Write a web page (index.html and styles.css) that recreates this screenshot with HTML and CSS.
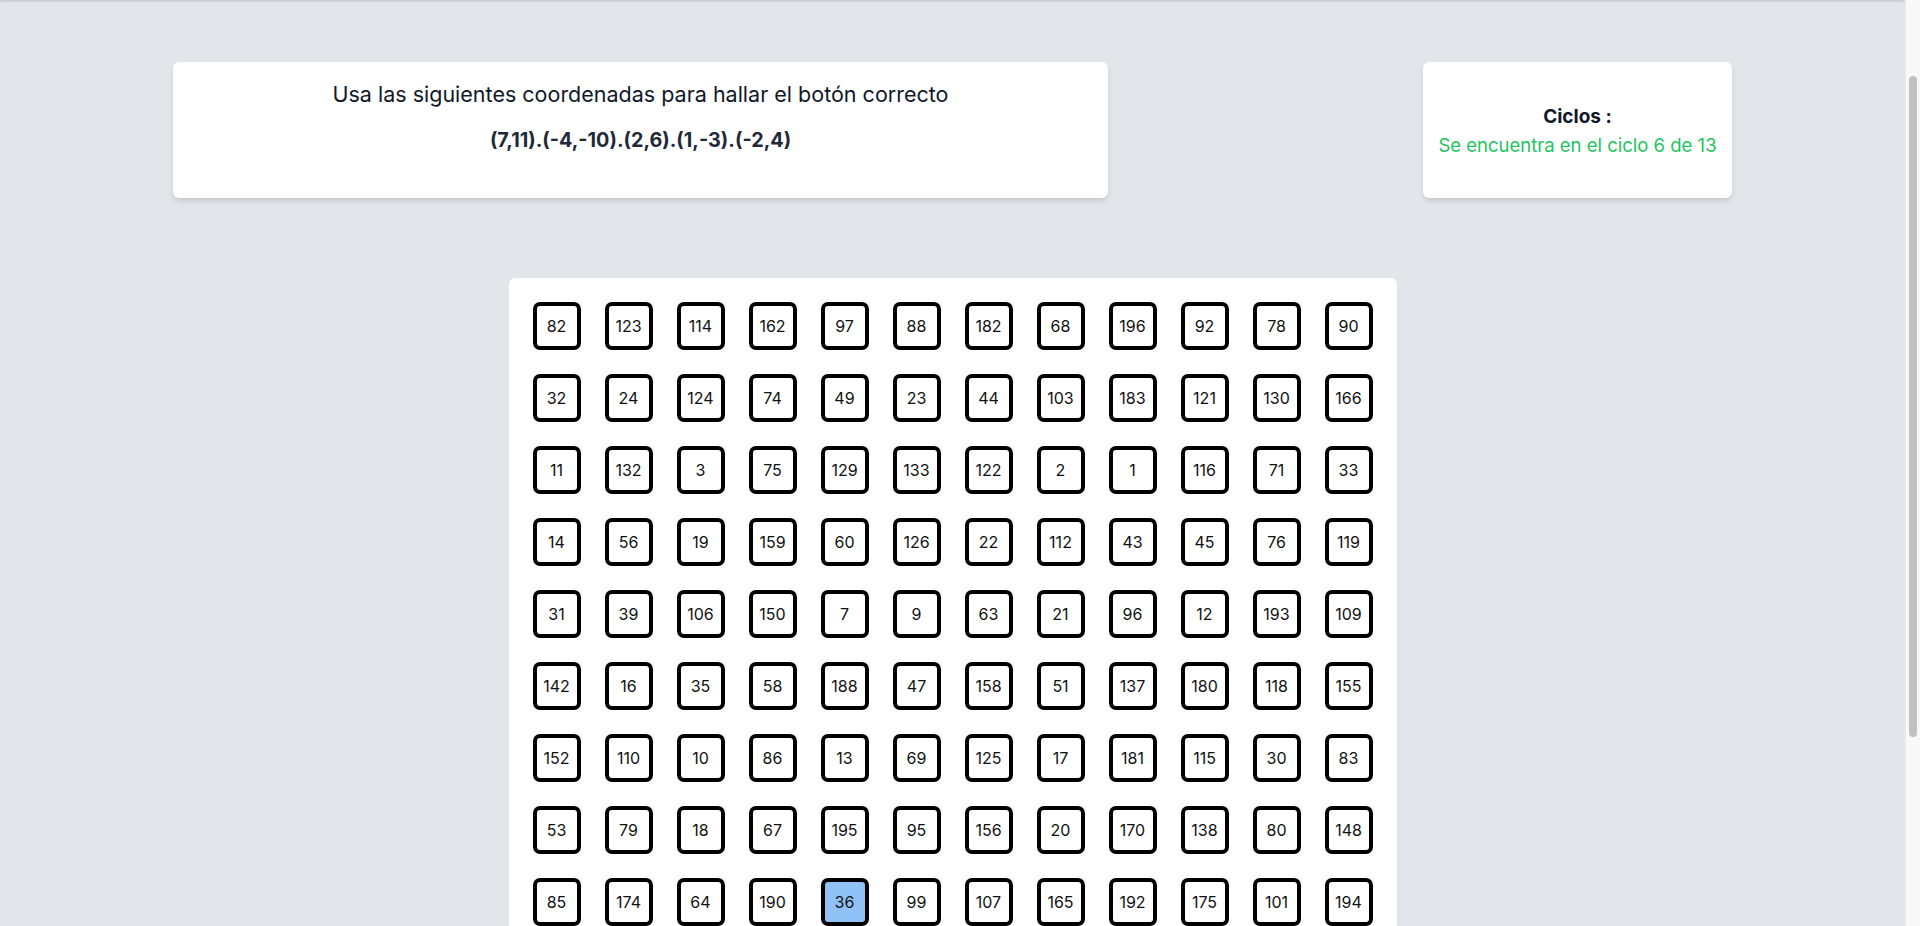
FILE: index.html
```html
<!DOCTYPE html>
<html lang="es">
<head>
<meta charset="utf-8">
<title>Coordenadas</title>
<link rel="stylesheet" href="styles.css">
</head>
<body>
<header class="topbar"></header>
<main class="page">
  <section class="top-row">
    <div class="card instructions">
      <p class="instructions-title">Usa las siguientes coordenadas para hallar el botón correcto</p>
      <p class="instructions-coords">(7,11).(-4,-10).(2,6).(1,-3).(-2,4)</p>
    </div>
    <div class="card cycles">
      <p class="cycles-label">Ciclos :</p>
      <p class="cycles-value">Se encuentra en el ciclo 6 de 13</p>
    </div>
  </section>
  <section class="board">
    <div class="board-grid">
      <button class="cell">82</button><button class="cell">123</button><button class="cell">114</button><button class="cell">162</button><button class="cell">97</button><button class="cell">88</button><button class="cell">182</button><button class="cell">68</button><button class="cell">196</button><button class="cell">92</button><button class="cell">78</button><button class="cell">90</button>
      <button class="cell">32</button><button class="cell">24</button><button class="cell">124</button><button class="cell">74</button><button class="cell">49</button><button class="cell">23</button><button class="cell">44</button><button class="cell">103</button><button class="cell">183</button><button class="cell">121</button><button class="cell">130</button><button class="cell">166</button>
      <button class="cell">11</button><button class="cell">132</button><button class="cell">3</button><button class="cell">75</button><button class="cell">129</button><button class="cell">133</button><button class="cell">122</button><button class="cell">2</button><button class="cell">1</button><button class="cell">116</button><button class="cell">71</button><button class="cell">33</button>
      <button class="cell">14</button><button class="cell">56</button><button class="cell">19</button><button class="cell">159</button><button class="cell">60</button><button class="cell">126</button><button class="cell">22</button><button class="cell">112</button><button class="cell">43</button><button class="cell">45</button><button class="cell">76</button><button class="cell">119</button>
      <button class="cell">31</button><button class="cell">39</button><button class="cell">106</button><button class="cell">150</button><button class="cell">7</button><button class="cell">9</button><button class="cell">63</button><button class="cell">21</button><button class="cell">96</button><button class="cell">12</button><button class="cell">193</button><button class="cell">109</button>
      <button class="cell">142</button><button class="cell">16</button><button class="cell">35</button><button class="cell">58</button><button class="cell">188</button><button class="cell">47</button><button class="cell">158</button><button class="cell">51</button><button class="cell">137</button><button class="cell">180</button><button class="cell">118</button><button class="cell">155</button>
      <button class="cell">152</button><button class="cell">110</button><button class="cell">10</button><button class="cell">86</button><button class="cell">13</button><button class="cell">69</button><button class="cell">125</button><button class="cell">17</button><button class="cell">181</button><button class="cell">115</button><button class="cell">30</button><button class="cell">83</button>
      <button class="cell">53</button><button class="cell">79</button><button class="cell">18</button><button class="cell">67</button><button class="cell">195</button><button class="cell">95</button><button class="cell">156</button><button class="cell">20</button><button class="cell">170</button><button class="cell">138</button><button class="cell">80</button><button class="cell">148</button>
      <button class="cell">85</button><button class="cell">174</button><button class="cell">64</button><button class="cell">190</button><button class="cell cell-active">36</button><button class="cell">99</button><button class="cell">107</button><button class="cell">165</button><button class="cell">192</button><button class="cell">175</button><button class="cell">101</button><button class="cell">194</button>
      <button class="cell">41</button><button class="cell">5</button><button class="cell">177</button><button class="cell">27</button><button class="cell">140</button><button class="cell">62</button><button class="cell">189</button><button class="cell">8</button><button class="cell">144</button><button class="cell">57</button><button class="cell">131</button><button class="cell">29</button>
      <button class="cell">161</button><button class="cell">72</button><button class="cell">40</button><button class="cell">117</button><button class="cell">94</button><button class="cell">185</button><button class="cell">26</button><button class="cell">153</button><button class="cell">66</button><button class="cell">4</button><button class="cell">171</button><button class="cell">100</button>
      <button class="cell">48</button><button class="cell">139</button><button class="cell">87</button><button class="cell">15</button><button class="cell">168</button><button class="cell">54</button><button class="cell">111</button><button class="cell">198</button><button class="cell">37</button><button class="cell">127</button><button class="cell">6</button><button class="cell">145</button>
    </div>
  </section>
</main>
<div class="scrollbar" aria-hidden="true"><div class="scrollbar-thumb"></div></div>
<script src="script.js"></script>
</body>
</html>
```

FILE: styles.css
```css
html, body {
  margin: 0;
  padding: 0;
}
body {
  background: #e2e5ea;
  font-family: Inter, "Noto Sans", "Liberation Sans", sans-serif;
  color: #111827;
  margin-right: 15px;
}
p {
  margin: 0;
}
.topbar {
  height: 106px;
  background: #ffffff;
  box-shadow: 0 1px 3px rgba(0,0,0,0.12), 0 1px 2px rgba(0,0,0,0.06);
  position: relative;
  z-index: 1;
}
.page {
  padding: 62px 173px 25px;
}
.top-row {
  display: grid;
  grid-template-columns: 935px 1fr 309px;
  height: 136px;
}
.card {
  background: #ffffff;
  border-radius: 6px;
  box-shadow: 0 4px 6px -1px rgba(0,0,0,0.1), 0 2px 4px -1px rgba(0,0,0,0.06);
}
.instructions {
  grid-column: 1;
  display: flex;
  flex-direction: column;
  align-items: center;
  padding-top: 18px;
  box-sizing: border-box;
}
.instructions-title {
  font-size: 21.5px;
  line-height: 28px;
  color: #111827;
}
.instructions-coords {
  margin-top: 18px;
  font-size: 19.8px;
  line-height: 28px;
  font-weight: 700;
  color: #1f2937;
}
.cycles {
  grid-column: 3;
  display: flex;
  flex-direction: column;
  align-items: center;
  justify-content: center;
}
.cycles-label {
  font-size: 19px;
  line-height: 28px;
  font-weight: 700;
  color: #111827;
  margin-top: 2px;
}
.cycles-value {
  font-size: 18.5px;
  line-height: 28px;
  color: #22c55e;
}
.board {
  width: 888px;
  margin: 80px auto 0;
  background: #ffffff;
  border-radius: 6px;
  padding: 24px;
  box-sizing: border-box;
}
.board-grid {
  display: grid;
  grid-template-columns: repeat(12, 48px);
  grid-auto-rows: 48px;
  gap: 24px;
}
.cell {
  width: 48px;
  height: 48px;
  box-sizing: border-box;
  border: 4px solid #000000;
  border-radius: 7px;
  background: #ffffff;
  font-family: Inter, "Noto Sans", sans-serif;
  font-size: 16px;
  color: #111111;
  padding: 0;
  display: flex;
  align-items: center;
  justify-content: center;
  cursor: pointer;
}
.cell-active {
  background: #90c2f8;
}
.scrollbar {
  position: fixed;
  top: 0;
  right: 0;
  width: 14px;
  height: 100%;
  background: #f8f8f8;
  border-left: 1px solid #ececec;
  z-index: 10;
}
.scrollbar-thumb {
  position: absolute;
  top: 76px;
  left: 3px;
  width: 8px;
  height: 661px;
  border-radius: 4px;
  background: #c1c1c1;
}
```

FILE: script.js
```js
window.scrollTo(0, 106);
```
